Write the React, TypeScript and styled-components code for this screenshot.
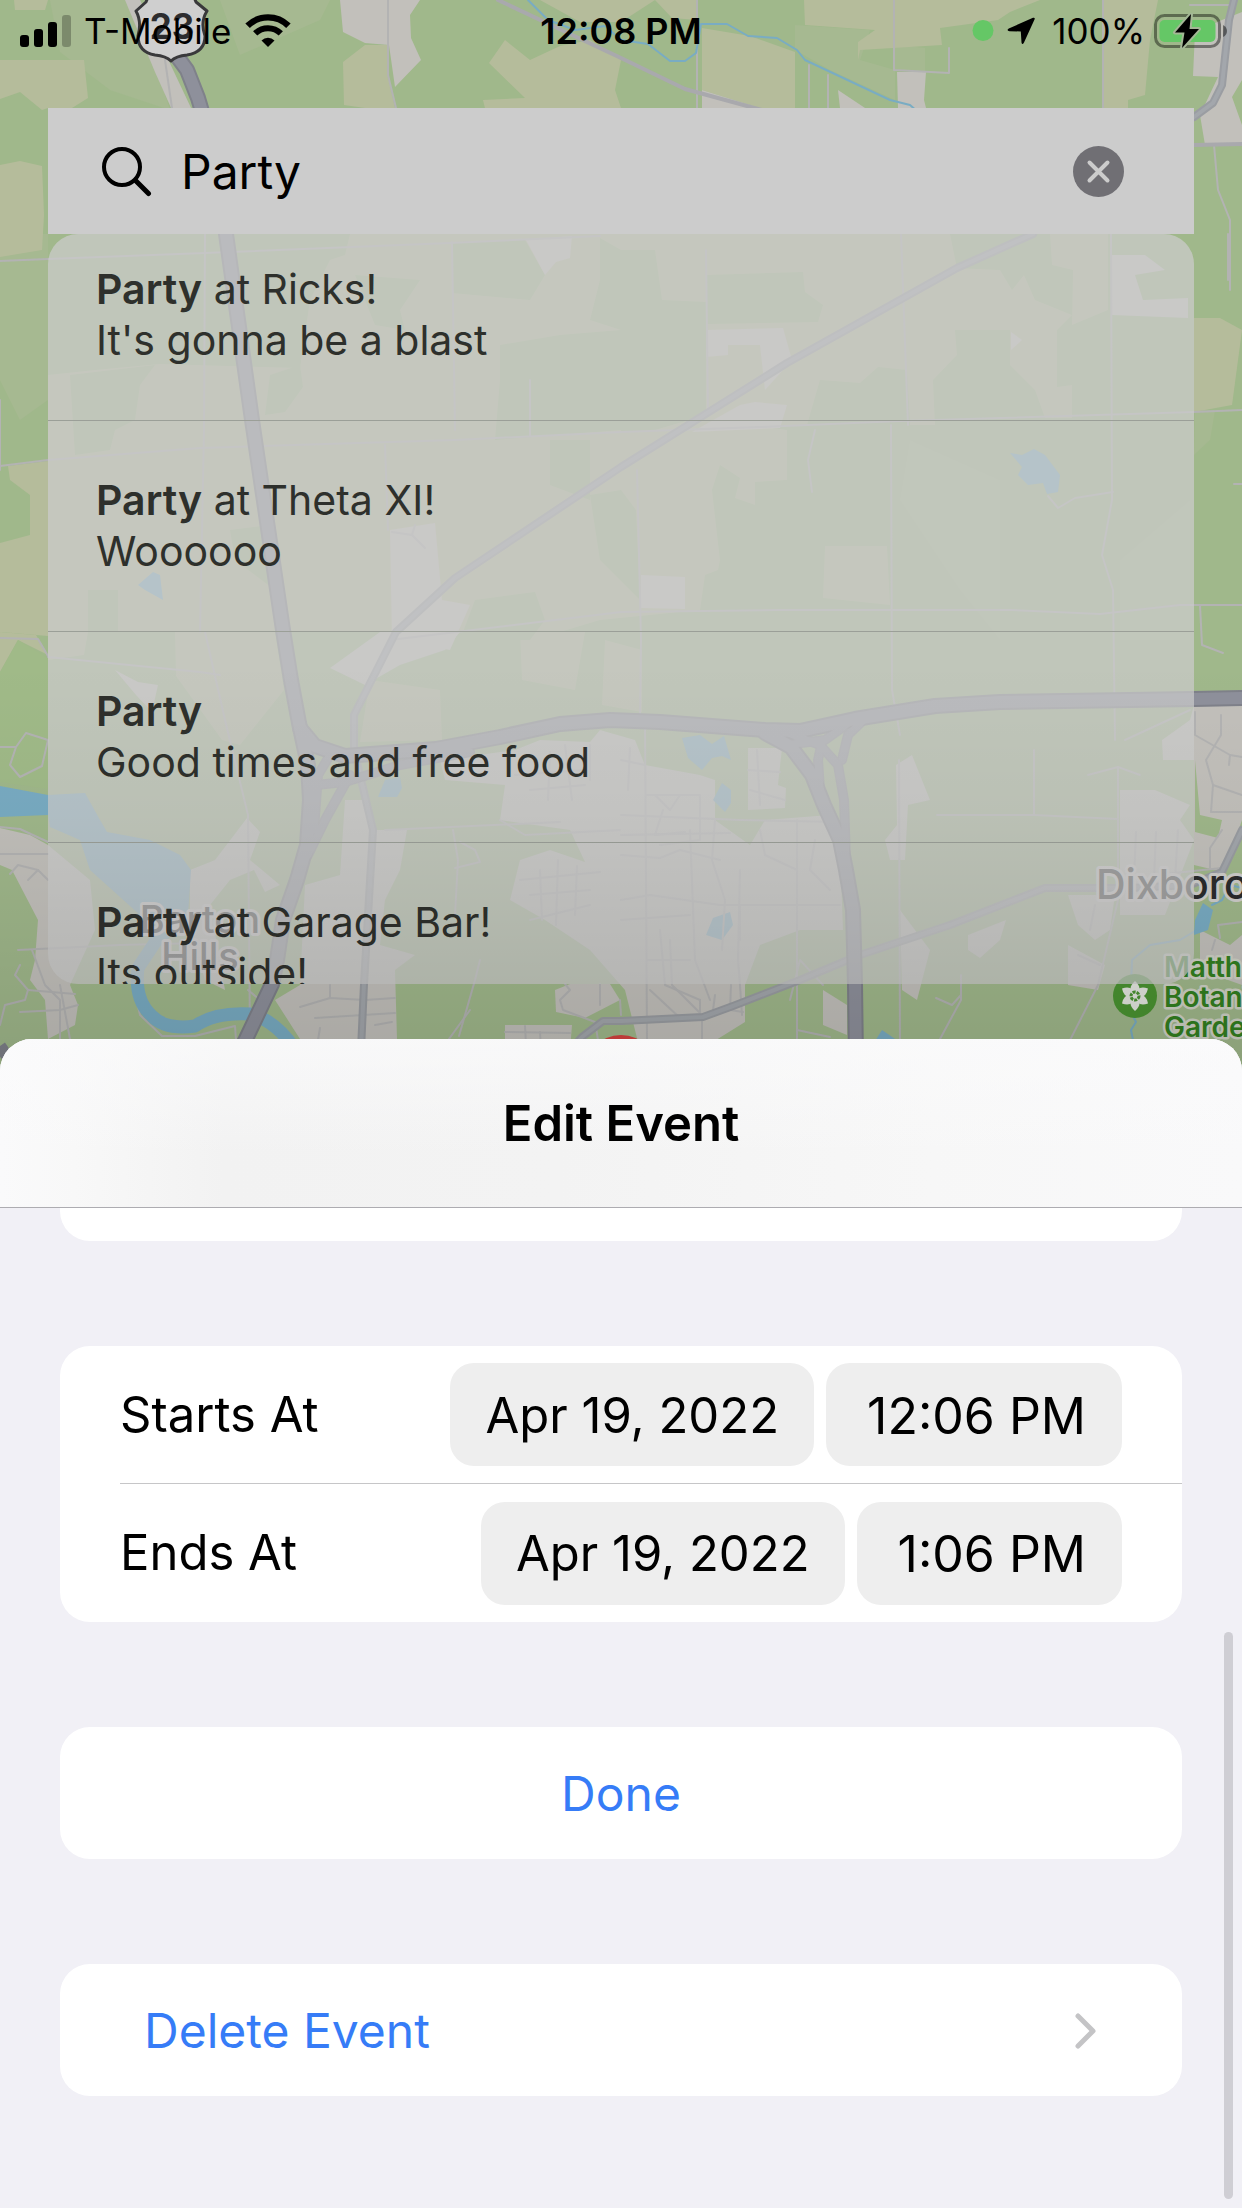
import React, { useState } from "react";
import styled, { createGlobalStyle } from "styled-components";

const GlobalStyle = createGlobalStyle`
  *, *::before, *::after { box-sizing: border-box; }
  html, body { margin: 0; }
  body {
    font-family: Inter, "Liberation Sans", sans-serif;
    color: #000;
    background: #f1f0f6;
  }
  button, input { font: inherit; color: inherit; }
`;

const Screen = styled.div`
  position: relative;
  display: flex;
  flex-direction: column;
  min-height: 100vh;
  overflow: hidden;
`;

const MapLayer = styled.div`
  position: absolute;
  inset: 0 0 auto 0;
  height: 1100px;
  background: #a0b88b;
  overflow: hidden;

  svg { display: block; width: 100%; height: 100%; }
`;

const Shade = styled.div`
  position: absolute;
  inset: 660px 0 auto 0;
  height: 440px;
  pointer-events: none;
  background: linear-gradient(rgba(0, 0, 0, 0), rgba(0, 0, 0, 0.03) 35%, rgba(0, 0, 0, 0.14));
`;

const StatusBar = styled.header`
  position: relative;
  display: grid;
  grid-template-columns: 1fr auto 1fr;
  align-items: start;
  height: 108px;
  padding: 10px 14px 0;
  font-size: 35px;
  line-height: 42px;
`;

const StatusGroup = styled.div<{ $end?: boolean }>`
  display: flex;
  align-items: center;
  justify-content: ${(p) => (p.$end ? "flex-end" : "flex-start")};
  gap: ${(p) => (p.$end ? "9px" : "13px")};
  height: 42px;
  padding-left: ${(p) => (p.$end ? "0" : "6px")};

  svg { display: block; flex: none; }
`;

const Clock = styled.time`
  font-size: 36px;
  font-weight: 600;
`;

const Finder = styled.main`
  position: relative;
  padding: 0 48px;
`;

const SearchBar = styled.form`
  display: flex;
  align-items: center;
  gap: 29px;
  height: 126px;
  padding: 0 70px 0 53px;
  background: #ccc;

  svg { display: block; flex: none; }
`;

const SearchInput = styled.input`
  flex: 1;
  min-width: 0;
  padding: 2px 0 0;
  border: 0;
  outline: 0;
  background: none;
  font-size: 48px;
  line-height: 60px;
`;

const ClearButton = styled.button`
  display: block;
  padding: 0;
  border: 0;
  background: none;
  cursor: pointer;
`;

const Results = styled.div`
  height: 750px;
  overflow: hidden;
  border-radius: 30px;
  background: rgba(204, 204, 204, 0.72);
`;

const ResultList = styled.ul`
  margin: -24px 0 0;
  padding: 0;
  list-style: none;
`;

const ResultItem = styled.li`
  border-bottom: 1px solid #9b9f98;
`;

const ResultButton = styled.button`
  display: block;
  width: 100%;
  padding: 54px 48px;
  border: 0;
  background: none;
  color: #2e302c;
  font-size: 41px;
  line-height: 51px;
  text-align: left;
  cursor: pointer;
`;

const ResultLine = styled.span`
  display: block;
`;

const Match = styled.b`
  font-weight: 600;
`;

const Sheet = styled.section`
  position: relative;
  flex: 1;
  display: flex;
  flex-direction: column;
  margin-top: 55px;
  border-radius: 32px 32px 0 0;
  overflow: hidden;
  background: #f1f0f6;
`;

const SheetHeader = styled.header`
  display: flex;
  align-items: center;
  justify-content: center;
  height: 169px;
  padding-top: 2px;
  border-bottom: 1px solid #adacb1;
  background:
    linear-gradient(rgba(251, 251, 252, 0.7), rgba(251, 251, 252, 0) 70%),
    linear-gradient(90deg, #fafafb, #f8f8f8 6%, #f2f2f2 18%, #f3f3f3 45%, #f7f7f7 75%, #f9f9fa);
`;

const SheetTitle = styled.h1`
  margin: 0;
  font-size: 49px;
  line-height: 60px;
  font-weight: 600;
`;

const SheetBody = styled.div`
  flex: 1;
  display: flex;
  flex-direction: column;
  gap: 105px;
  padding: 0 60px 112px;
`;

const Card = styled.div<{ $tail?: boolean }>`
  min-height: ${(p) => (p.$tail ? "33px" : "0")};
  border-radius: ${(p) => (p.$tail ? "0 0 30px 30px" : "30px")};
  background: #fff;
  overflow: hidden;
`;

const FieldRow = styled.div`
  display: flex;
  align-items: center;
  gap: 12px;
  height: 138px;
  margin-left: 60px;
  padding-right: 60px;
  font-size: 49px;
  line-height: 60px;

  &:not(:last-child) { border-bottom: 1px solid #c6c6c8; }
`;

const FieldName = styled.span`
  flex: 1;
`;

const Pill = styled.button<{ $time?: boolean }>`
  height: 103px;
  padding: ${(p) => (p.$time ? "2px 36px 0 41px" : "2px 35px 0")};
  border: 0;
  border-radius: 24px;
  background: #eee;
  font-size: ${(p) => (p.$time ? "50px" : "49px")};
  cursor: pointer;
`;

const ActionButton = styled.button<{ $nav?: boolean }>`
  display: flex;
  align-items: center;
  justify-content: ${(p) => (p.$nav ? "space-between" : "center")};
  width: 100%;
  height: 132px;
  padding: 2px 84px 0;
  border: 0;
  border-radius: 30px;
  background: #fff;
  color: #367cf7;
  font-size: 48px;
  line-height: 60px;
  cursor: pointer;
`;

const ScrollThumb = styled.div`
  position: absolute;
  top: 593px;
  right: 9px;
  bottom: 9px;
  width: 9px;
  border-radius: 5px;
  background: #cfced4;
`;

const beige = [
  "0,60 84,60 88,98 72,108 48,108 42,110 20,92 0,99",
  "14,0 48,0 45,10 15,10",
  "0,165 20,161 42,166 44,215 42,250 0,257",
  "388,45 365,45 343,62 344,105 365,108 395,108 389,80",
  "505,40 530,60 560,46 590,40 621,60 615,90 621,108 485,108 483,100 525,98 489,63",
  "540,0 655,0 621,22 580,22",
  "702,28 750,36 795,52 795,108 760,108 702,90",
  "655,0 697,0 697,20 672,18",
  "804,0 1040,0 1010,12 998,20 940,28 942,45 860,50 858,60 858,42 875,30 805,25",
  "1103,0 1158,0 1150,40 1145,95 1128,100 1128,108 1104,108",
  "48,234 950,234 957,268 1000,270 1012,290 1024,275 1035,300 1072,315 1057,330 1057,387 1072,385 1072,418 1045,418 1035,390 1010,365 1010,330 955,330 957,355 933,380 935,425 910,425 907,370 878,367 860,383 820,380 807,425 750,425 787,430 787,480 755,482 755,505 735,498 740,478 720,465 712,490 720,560 718,570 705,575 700,610 600,620 560,632 48,632",
  "1050,234 1108,234 1108,310 1072,325 1073,270 1052,265",
  "8,466 48,461 48,636 0,632 0,543 30,535 30,495 10,480",
  "825,546 887,546 890,605 823,598",
  "1194,318 1220,318 1242,330 1232,405 1194,412",
  "0,632 36,635 48,655 18,640 0,672",
  "48,632 88,632 84,655 48,660",
  "175,632 275,632 284,690 240,745 222,740 176,676",
  "370,680 440,690 442,740 360,742",
  "520,632 585,632 575,690 522,680",
  "605,640 642,650 642,712 602,705",
];

const fields = [
  "48,234 350,234 345,255 330,260 310,300 300,368 160,364 95,370 48,375",
  "70,375 155,365 140,385 135,420 115,430 110,450 75,455",
  "270,375 300,365 303,387 285,412 265,415",
  "355,275 420,280 400,310 405,330 375,325",
  "452,242 525,240 545,275 530,300 452,293",
  "500,345 560,335 621,330 621,430 495,440 500,380",
  "550,440 590,440 590,500 550,485",
  "230,530 270,525 275,590 235,560",
  "88,590 118,590 118,632 88,632",
  "475,600 535,592 545,620 530,640 460,640",
  "590,495 621,490 636,510 640,600 600,560",
  "706,275 803,272 805,292 823,305 818,322 706,324",
  "621,250 655,250 662,300 706,302 706,415 655,430 621,432",
  "600,238 621,250 621,330 590,320 600,280",
];

const pale = [
  "50,0 135,0 170,110 110,90 60,52",
  "220,0 330,0 320,20 240,55",
  "795,25 870,30 860,60 895,70 895,100 830,70 795,50",
  "895,45 925,48 925,72 895,70",
  "1195,410 1215,410 1210,440 1194,455",
  "0,234 48,234 48,400 20,420 0,380",
  "1120,560 1190,500 1190,640 1120,640",
  "910,440 1000,480 1000,640 960,590 900,500",
];

const town = [
  "125,0 140,0 192,110 172,110 155,72",
  "340,0 420,0 410,15 411,38 421,60 395,87 389,45 365,43 343,32",
  "702,90 760,108 702,108",
  "897,72 926,72 924,100 926,108 898,108",
  "838,90 865,108 840,108",
  "1222,20 1242,12 1242,80 1232,97 1242,125 1242,145 1205,145 1200,115 1218,77 1193,76 1195,32",
  "526,240 572,236 570,258 556,262 545,275",
  "390,530 435,523 442,600 470,605 450,650 392,640",
  "330,668 380,632 460,632 445,650 400,665 365,685",
  "706,330 783,328 792,360 765,390 760,345 728,345 728,355 706,357",
  "755,402 787,405 780,428 692,432 740,405",
  "1111,255 1145,255 1165,270 1135,275 1143,300 1188,298 1188,318 1111,315",
  "1011,332 1022,340 1011,350",
  "641,575 685,577 685,609 641,608",
  "115,670 138,682 158,685 152,712 136,695",
  "0,828 30,835 48,845 90,880 95,930 70,985 78,1005 75,1025 48,1039 45,1000 30,980 35,960 38,920 12,870 0,865",
  "247,818 260,832 250,860 280,885 265,892 254,870 230,880 210,905 225,990 205,980 190,930 190,870 215,860",
  "345,800 370,800 372,830 407,830 400,870 385,900 380,945 415,955 395,970 397,1039 300,1039 275,1000 300,985 305,885 340,875",
  "440,760 515,750 540,740 590,742 600,730 635,740 645,765 700,775 715,780 715,820 750,845 765,820 830,815 840,850 843,930 800,930 760,945 745,985 745,1022 700,1050 640,1050 625,990 590,950 545,920 510,900 520,860 550,850 585,862 570,830 500,820 505,785 445,780",
  "748,748 782,748 778,785 786,788 785,808 748,810",
  "896,765 912,755 930,800 908,805 905,860 890,860 885,840 897,825",
  "1120,790 1155,790 1190,805 1180,820 1194,840 1165,915 1120,915",
  "1194,705 1242,705 1242,820 1225,870 1215,870 1194,865 1194,760 1163,760 1162,740 1190,720",
  "1068,895 1115,895 1110,930 1095,940 1078,925",
  "1068,945 1105,965 1098,990 1068,985",
  "900,910 930,950 917,1000 902,990",
  "968,935 1006,920 1000,940 980,958 968,950",
  "823,990 847,1005 847,1035 823,1025",
  "1200,930 1230,945 1242,935 1242,985 1200,970",
  "505,1025 572,1025 570,1050 505,1050",
  "570,984 610,984 620,1000 585,1018 556,1012 555,990",
  "640,1020 710,1022 712,1050 640,1050",
];

const water = [
  "138,585 153,572 160,575 163,600 145,590",
  "1010,453 1022,455 1034,449 1045,455 1060,475 1058,492 1047,494 1043,483 1028,485 1018,475 1022,467",
  "0,786 48,795 85,793 100,820 107,832 150,840 180,855 191,870 188,915 140,915 90,870 80,840 50,827 48,815 0,817",
  "682,738 700,735 712,744 724,736 731,760 722,756 712,758 702,770 688,758",
  "713,800 722,783 731,790 731,803 725,812",
  "706,935 713,918 730,912 733,925 722,940",
  "378,797 385,780 400,777 402,788 397,797",
  "875,1041 882,1030 898,1041",
  "1203,903 1213,910 1208,930 1194,935 1195,920",
];

const lanes = [
  "388,0 388,75 396,108", "165,60 172,108", "697,0 697,108", "894,0 894,70 949,73 949,48",
  "809,65 809,108", "828,75 828,108", "1103,0 1103,108", "1214,145 1218,190 1230,220 1230,290",
  "1190,5 1234,5", "0,261 48,259 205,253 450,243 600,236", "0,466 48,460 200,448 455,440 621,432 760,427 900,421 1194,412 1242,410",
  "205,234 204,430 200,632", "452,242 455,430", "530,380 530,436", "385,445 388,530",
  "706,250 708,415", "901,234 908,425", "891,425 892,690 900,735", "815,430 808,460 812,492",
  "1111,234 1112,500 1102,555 1113,590 1115,740", "1113,492 1075,498 1058,508 1048,496",
  "637,470 641,640 640,720", "390,640 621,612 780,610 1010,610 1100,614 1180,605 1242,605",
  "1200,605 1202,645 1223,653", "1228,234 1228,280", "0,470 0,400", "1234,484 1242,484",
  "205,632 225,720 248,815 250,1039", "48,657 200,672 220,675", "0,747 16,747 26,733 48,740 42,766 20,777 10,765 16,747",
  "0,638 38,639 48,656", "0,827 20,829 48,842", "0,854 48,854", "10,874 18,865 38,870 48,880", "38,870 28,880",
  "18,950 120,945 200,943", "32,950 45,985 60,1000 60,1039", "20,965 15,975 28,990 25,1000 5,1005 0,1025",
  "28,990 75,994", "20,1012 60,1010 78,1005", "60,985 70,1039", "133,985 140,1015 162,1036 195,1036 235,1026 236,1040",
  "248,990 260,1000", "300,1007 330,998 365,1000 395,998", "315,1018 395,1013", "330,985 330,998", "320,1028 318,1040",
  "375,1025 392,1022", "385,830 560,822", "453,830 458,860 455,915", "455,868 480,862 475,850 460,842",
  "520,880 600,872", "530,895 590,890", "530,920 590,905", "558,860 556,925", "540,870 542,920", "577,866 575,915",
  "515,775 585,770", "530,790 585,785", "550,752 548,800", "565,745 572,800", "590,745 590,780",
  "500,820 525,835 620,830", "645,720 647,1039", "621,760 645,765", "647,795 700,795 700,840 660,845",
  "630,748 628,790", "655,795 670,810 680,795", "621,815 740,820 840,822", "621,835 730,833", "663,810 655,835 685,832",
  "621,855 660,858 680,850 720,860", "690,830 695,960 710,1000", "715,820 712,860 725,900 722,950",
  "740,870 738,960 740,985 742,1015", "797,820 797,1050", "760,830 765,855 797,870", "815,840 810,870 830,890",
  "621,900 650,895 720,905 840,905", "621,920 690,915", "740,905 740,940", "660,930 665,985 700,1000",
  "648,960 690,960", "650,990 680,1018", "670,940 672,985 702,1015 702,1039", "700,1000 700,1020", "713,1010 715,995",
  "731,985 730,1010 743,1012", "621,1015 620,1000", "748,770 780,772", "757,750 760,805", "750,790 785,800",
  "937,815 1034,815 1118,819", "1034,750 1034,815", "1088,775 1118,767 1140,775", "1125,740 1190,710",
  "1118,767 1118,900 1098,985 1065,1050", "1136,832 1134,880", "1156,832 1154,880", "1178,830 1175,880",
  "899,760 900,1050", "961,975 961,1000 940,1039", "936,998 952,1005 961,995", "459,1036 475,980 480,960",
  "441,1050 470,1010", "565,984 570,990 560,1000 563,1010 595,1022 598,1040", "600,984 600,1005",
  "505,1032 570,1033", "525,1026 526,1045", "540,1032 541,1050", "1221,715 1221,735 1206,760 1213,785 1211,812 1242,812",
  "1195,712 1195,735 1230,755 1242,757", "1230,755 1229,765", "1213,785 1242,795", "1222,830 1210,848 1210,868",
  "1155,875 1222,868", "1215,940 1212,950", "1220,938 1218,925 1242,922", "797,1030 830,1037",
  "823,985 800,960 790,1000", "392,532 412,535 425,548", "412,535 415,525", "1095,905 1090,930", "1078,955 1100,965",
];

const Roads = ({ points, width, color }: { points: string[]; width: number; color: string }) => (
  <g fill="none" stroke={color} strokeWidth={width} strokeLinejoin="round" strokeLinecap="round">
    {points.map((p) => (
      <polyline key={p} points={p} />
    ))}
  </g>
);

const Areas = ({ shapes, color }: { shapes: string[]; color: string }) => (
  <g fill={color}>
    {shapes.map((p) => (
      <polygon key={p} points={p} />
    ))}
  </g>
);

const freeways = [
  "165,40 187,70 198,98 206,125 216,172 226,234 252,420 283,630 291,680 299,723 308,765 310,800 307,845 297,880 283,920 277,960 272,984 245,1041 225,1080",
  "300,728 315,746 345,756 436,749 500,737 560,724 610,720 660,722 765,730 800,731 855,719 935,706 1000,702 1194,699 1242,698",
  "765,733 791,747 812,775 824,805 840,840 846,870 853,910 855,984 856,1060",
];

const ramps = [
  "316,785 345,782 400,765 470,752",
  "330,755 318,775 314,830",
  "350,775 325,820 308,855",
  "775,728 820,745 838,765 844,800 846,860",
  "870,714 848,735 842,760",
  "785,745 825,740 850,722",
  "822,742 818,760 820,790",
];

const mainRoads = [
  "1033,234 957,268 787,363 621,467 455,578 396,632 354,715 354,750 373,830 366,950 364,984 361,1050",
  "1234,0 1229,20 1222,85 1213,103 1194,117",
  "570,1050 582,1037 603,1021 621,1021 703,1017 733,1006 800,980 860,955 950,925 1045,888 1130,888 1190,885 1222,872 1242,830",
];

const CountyMap = () => (
  <svg viewBox="0 0 1242 1100" preserveAspectRatio="xMidYMin slice" role="img" aria-label="Map">
    <Areas shapes={pale} color="#a6b991" />
    <Areas shapes={beige} color="#b5bc9b" />
    <Areas shapes={fields} color="#a1b88c" />
    <Areas shapes={town} color="#c2c0bb" />
    <polygon points="1195,760 1200,815 1222,820 1218,838 1195,832" fill="#a0b88b" />
    <Areas shapes={water} color="#79acc3" />
    <polygon points="0,672 18,640 48,658 48,789 0,782" fill="#a0ba88" />
    <Roads points={lanes} width={2} color="#b3b3b3" />
    <Roads points={["498,0 621,58 685,89 780,115", "1194,145 1242,144"]} width={4} color="#a9a9ad" />
    <Roads
      points={[
        "528,0 548,20 575,30 605,26 621,40 648,44 670,61 685,61 696,53 701,24 727,24 748,36 777,38 797,50 805,60 890,100 910,105 918,112",
        "1242,888 1230,885 1222,900 1212,905",
        "1200,928 1180,940 1150,945 1132,960 1130,1010 1136,1022 1131,1030 1134,1045",
      ]}
      width={2}
      color="#79acc3"
    />
    <path
      d="M188 915 L158 938 L138 968 Q134 1000 152 1016 Q165 1030 195 1026 Q215 1012 250 1014 Q275 1020 294 1048"
      fill="none"
      stroke="#79acc3"
      strokeWidth="13"
      strokeLinejoin="round"
    />
    <Roads points={mainRoads} width={8} color="#9a9da2" />
    <Roads points={mainRoads} width={4} color="#a3a7ac" />
    <Roads points={ramps} width={10} color="#8a8c95" />
    <Roads points={freeways} width={16} color="#7f818a" />
    <Roads points={freeways} width={12} color="#8e909b" />
    <Roads points={ramps} width={7} color="#8e909b" />
    <path d="M0 1046 L20 1075" stroke="#7f818a" strokeWidth="12" />
    <circle cx="621" cy="1073" r="38" fill="#d5433f" />

    <path
      d="M150 -8 L146 2 L136 11 Q142 22 138 36 Q138 52 155 55 Q166 56 171 61 Q176 56 187 55 Q205 52 205 36 Q200 22 207 11 L196 2 L192 -8 Z"
      fill="#cfcfcf"
      stroke="#39393b"
      strokeWidth="3"
      strokeLinejoin="round"
    />
    <g fontFamily="Inter, sans-serif" paintOrder="stroke" strokeLinejoin="round">
      <text x="172" y="39" fontSize="35" fontWeight="700" fill="#2d2d2f" textAnchor="middle">23</text>
      <g stroke="#cfcecb" strokeWidth="6" fill="#2b2b2c" fontWeight="500">
        <text x="200" y="933" fontSize="38" textAnchor="middle">Barton</text>
        <text x="200" y="970" fontSize="38" textAnchor="middle">Hills</text>
        <text x="1096" y="899" fontSize="41">Dixboro</text>
      </g>
      <g stroke="#cfd2c6" strokeWidth="5" fill="#328020" fontSize="28" fontWeight="600">
        <text x="1164" y="977">Matthaei</text>
        <text x="1164" y="1007">Botanical</text>
        <text x="1164" y="1037">Gardens</text>
      </g>
    </g>
    <circle cx="1135" cy="996" r="22" fill="#4a9431" />
    <g fill="#e4e7e0">
      {[0, 60, 120, 180, 240, 300].map((a) => (
        <path key={a} d="M1135 996 Q1126 989 1135 981 Q1144 989 1135 996 Z" transform={`rotate(${a} 1135 996)`} />
      ))}
      <circle cx="1135" cy="996" r="8" />
    </g>
    <circle cx="1135" cy="996" r="4" fill="#e4e7e0" stroke="#4a9431" strokeWidth="3" strokeDasharray="3 1" />
  </svg>
);

const SignalIcon = () => (
  <svg width="51" height="32" viewBox="0 0 51 32" aria-hidden="true">
    <rect x="0" y="20" width="9" height="12" rx="3" />
    <rect x="14" y="14" width="9" height="18" rx="3" />
    <rect x="28" y="7" width="9" height="25" rx="3" />
    <rect x="42" y="0" width="9" height="32" rx="3" opacity="0.25" />
  </svg>
);

const WifiIcon = () => (
  <svg width="46" height="34" viewBox="0 0 46 34" aria-hidden="true">
    <path d="M2.6 11.8a29 29 0 0 1 40.8 0" fill="none" stroke="#000" strokeWidth="6.4" />
    <path d="M10.2 19.4a18.2 18.2 0 0 1 25.6 0" fill="none" stroke="#000" strokeWidth="6" />
    <path d="M23 33l-6.5-6.6a9.2 9.2 0 0 1 13 0z" />
  </svg>
);

const BatteryIcon = () => (
  <svg width="74" height="36" viewBox="0 0 74 36" aria-hidden="true">
    <rect x="1.5" y="2.5" width="64" height="31" rx="9" fill="none" stroke="#000" strokeOpacity="0.42" strokeWidth="3" />
    <path d="M69 12q4 2 4 6t-4 6z" opacity="0.45" />
    <rect x="5.5" y="7" width="56" height="22" rx="5" fill="#65c766" />
    <path d="M37 1 21 19.5h9.5L28 35l17-19h-9.5z" stroke="#a3b795" strokeWidth="4" paintOrder="stroke" strokeLinejoin="round" />
  </svg>
);

const LocationIcon = () => (
  <svg width="36" height="28" viewBox="0 0 36 28" aria-hidden="true">
    <path d="M26 .8Q28.4 .2 27.5 2.6L17 25.5Q15.2 28.5 14.5 25.5L13.8 14.5 2.5 14.2Q-1 13.5 1.800 11.5z" />
  </svg>
);

const results = [
  { rest: " at Ricks!", detail: "It's gonna be a blast" },
  { rest: " at Theta XI!", detail: "Woooooo" },
  { rest: "", detail: "Good times and free food" },
  { rest: " at Garage Bar!", detail: "Its outside!" },
];

const fieldsData = [
  { name: "Starts At", date: "Apr 19, 2022", time: "12:06 PM" },
  { name: "Ends At", date: "Apr 19, 2022", time: "1:06 PM" },
];

export default function App() {
  const [query, setQuery] = useState("Party");

  return (
    <Screen>
      <GlobalStyle />
      <MapLayer>
        <CountyMap />
      </MapLayer>

      <StatusBar>
        <StatusGroup>
          <SignalIcon />
          <span>T-Mobile</span>
          <WifiIcon />
        </StatusGroup>
        <Clock>12:08 PM</Clock>
        <StatusGroup $end>
          <svg width="26" height="22" viewBox="0 0 26 22" aria-hidden="true">
            <circle cx="11" cy="10.5" r="10.5" fill="#65c766" />
          </svg>
          <LocationIcon />
          <span>100%</span>
          <BatteryIcon />
        </StatusGroup>
      </StatusBar>

      <Finder>
        <SearchBar onSubmit={(e) => e.preventDefault()}>
          <svg width="51" height="51" viewBox="0 0 51 51" fill="none" stroke="#000" strokeLinecap="round" aria-hidden="true">
            <circle cx="21" cy="21" r="18" strokeWidth="4" />
            <path d="M34.5 34.5 47.5 47.5" strokeWidth="5" />
          </svg>
          <SearchInput aria-label="Search events" value={query} onChange={(e) => setQuery(e.target.value)} />
          <ClearButton type="button" aria-label="Clear search" onClick={() => setQuery("")}>
            <svg width="51" height="51" viewBox="0 0 51 51" aria-hidden="true">
              <circle cx="25.5" cy="25.5" r="25.5" fill="#706f74" />
              <path d="M16.5 16.5l18 18M34.5 16.5l-18 18" stroke="#ccc" strokeWidth="4" strokeLinecap="round" />
            </svg>
          </ClearButton>
        </SearchBar>
        <Results>
          <ResultList>
            {results.map((r) => (
              <ResultItem key={r.detail}>
                <ResultButton type="button">
                  <ResultLine>
                    <Match>Party</Match>
                    {r.rest}
                  </ResultLine>
                  <ResultLine>{r.detail}</ResultLine>
                </ResultButton>
              </ResultItem>
            ))}
          </ResultList>
        </Results>
      </Finder>
      <Shade />

      <Sheet aria-labelledby="sheet-title">
        <SheetHeader>
          <SheetTitle id="sheet-title">Edit Event</SheetTitle>
        </SheetHeader>
        <SheetBody>
          <Card $tail />
          <Card>
            {fieldsData.map((f) => (
              <FieldRow key={f.name} role="group" aria-label={f.name}>
                <FieldName>{f.name}</FieldName>
                <Pill type="button">{f.date}</Pill>
                <Pill type="button" $time>{f.time}</Pill>
              </FieldRow>
            ))}
          </Card>
          <ActionButton type="button">Done</ActionButton>
          <ActionButton type="button" $nav>
            Delete Event
            <svg width="24" height="38" viewBox="0 0 24 38" fill="none" aria-hidden="true">
              <path d="M4 4l15 15L4 34" stroke="#c4c4c6" strokeWidth="5" strokeLinecap="round" strokeLinejoin="round" />
            </svg>
          </ActionButton>
        </SheetBody>
        <ScrollThumb />
      </Sheet>
    </Screen>
  );
}
